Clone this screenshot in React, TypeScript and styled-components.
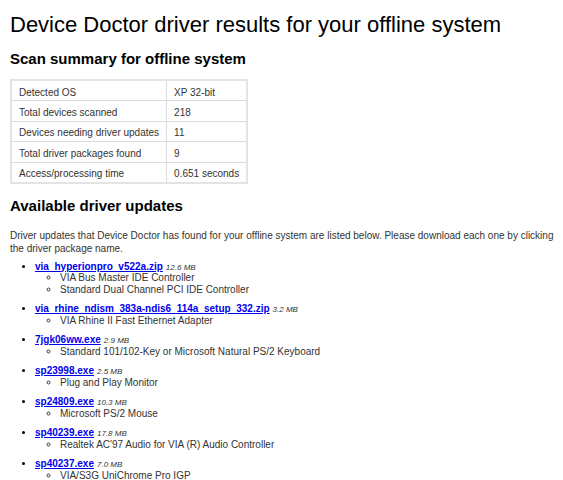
import React from "react";
import styled, { createGlobalStyle } from "styled-components";

const Global = createGlobalStyle`
  html, body { margin: 0; padding: 0; background: #fff; }
  body { font-family: "Liberation Sans", Arial, sans-serif; color: #333; }
`;

const Page = styled.div`
  padding: 12px 5px 0 10px;
`;

const Title = styled.h1`
  margin: 0;
  font-size: 22px;
  font-weight: normal;
  color: #000;
  line-height: 26px;
`;

const Heading = styled.h2<{ $top: number; $bottom: number }>`
  margin: ${(p) => p.$top}px 0 ${(p) => p.$bottom}px;
  font-size: 15px;
  font-weight: bold;
  color: #000;
  line-height: 18px;
`;

const Table = styled.table`
  border-collapse: collapse;
  border: 2px solid #e4e4e4;
  font-size: 10px;
  color: #333;
`;

const Row = styled.tr`
  height: 20.5px;
`;

const Cell = styled.td<{ $wide?: boolean }>`
  border: 1px solid #dcdcdc;
  padding: 3px 7px 0 7px;
  white-space: nowrap;
  width: ${(p) => (p.$wide ? "140px" : "64px")};
`;

const Intro = styled.p`
  margin: 0 0 6px;
  font-size: 10px;
  line-height: 13px;
  color: #333;
`;

const List = styled.ul`
  margin: 0;
  padding: 0 0 0 25px;
  list-style: disc;
  font-size: 10px;
  color: #000;
`;

const Item = styled.li`
  margin: 0 0 8px;
  line-height: 11.5px;
`;

const Link = styled.a`
  color: #0000ee;
  font-weight: bold;
  text-decoration: underline;
`;

const Size = styled.span`
  font-style: italic;
  font-size: 8px;
  line-height: 8px;
  color: #333;
  margin-left: 3px;
`;

const SubList = styled.ul`
  margin: 0;
  padding: 0 0 0 25px;
  list-style: circle;
`;

const SubItem = styled.li`
  line-height: 11.5px;
  color: #333;
`;

const summary: [string, string][] = [
  ["Detected OS", "XP 32-bit"],
  ["Total devices scanned", "218"],
  ["Devices needing driver updates", "11"],
  ["Total driver packages found", "9"],
  ["Access/processing time", "0.651 seconds"],
];

const drivers: { name: string; size: string; devices: string[] }[] = [
  {
    name: "via_hyperionpro_v522a.zip",
    size: "12.6 MB",
    devices: ["VIA Bus Master IDE Controller", "Standard Dual Channel PCI IDE Controller"],
  },
  {
    name: "via_rhine_ndism_383a-ndis6_114a_setup_332.zip",
    size: "3.2 MB",
    devices: ["VIA Rhine II Fast Ethernet Adapter"],
  },
  {
    name: "7jgk06ww.exe",
    size: "2.9 MB",
    devices: ["Standard 101/102-Key or Microsoft Natural PS/2 Keyboard"],
  },
  { name: "sp23998.exe", size: "2.5 MB", devices: ["Plug and Play Monitor"] },
  { name: "sp24809.exe", size: "10.3 MB", devices: ["Microsoft PS/2 Mouse"] },
  {
    name: "sp40239.exe",
    size: "17.8 MB",
    devices: ["Realtek AC'97 Audio for VIA (R) Audio Controller"],
  },
  { name: "sp40237.exe", size: "7.0 MB", devices: ["VIA/S3G UniChrome Pro IGP"] },
];

export default function App() {
  return (
    <Page>
      <Global />
      <Title>Device Doctor driver results for your offline system</Title>
      <Heading $top={12} $bottom={11}>
        Scan summary for offline system
      </Heading>
      <Table>
        <tbody>
          {summary.map(([k, v]) => (
            <Row key={k}>
              <Cell $wide>{k}</Cell>
              <Cell>{v}</Cell>
            </Row>
          ))}
        </tbody>
      </Table>
      <Heading $top={13} $bottom={14}>
        Available driver updates
      </Heading>
      <Intro>
        Driver updates that Device Doctor has found for your offline system are listed below. Please
        download each one by clicking the driver package name.
      </Intro>
      <List>
        {drivers.map((d) => (
          <Item key={d.name}>
            <Link href="#">{d.name}</Link>
            <Size>{d.size}</Size>
            <SubList>
              {d.devices.map((dev) => (
                <SubItem key={dev}>{dev}</SubItem>
              ))}
            </SubList>
          </Item>
        ))}
      </List>
    </Page>
  );
}
